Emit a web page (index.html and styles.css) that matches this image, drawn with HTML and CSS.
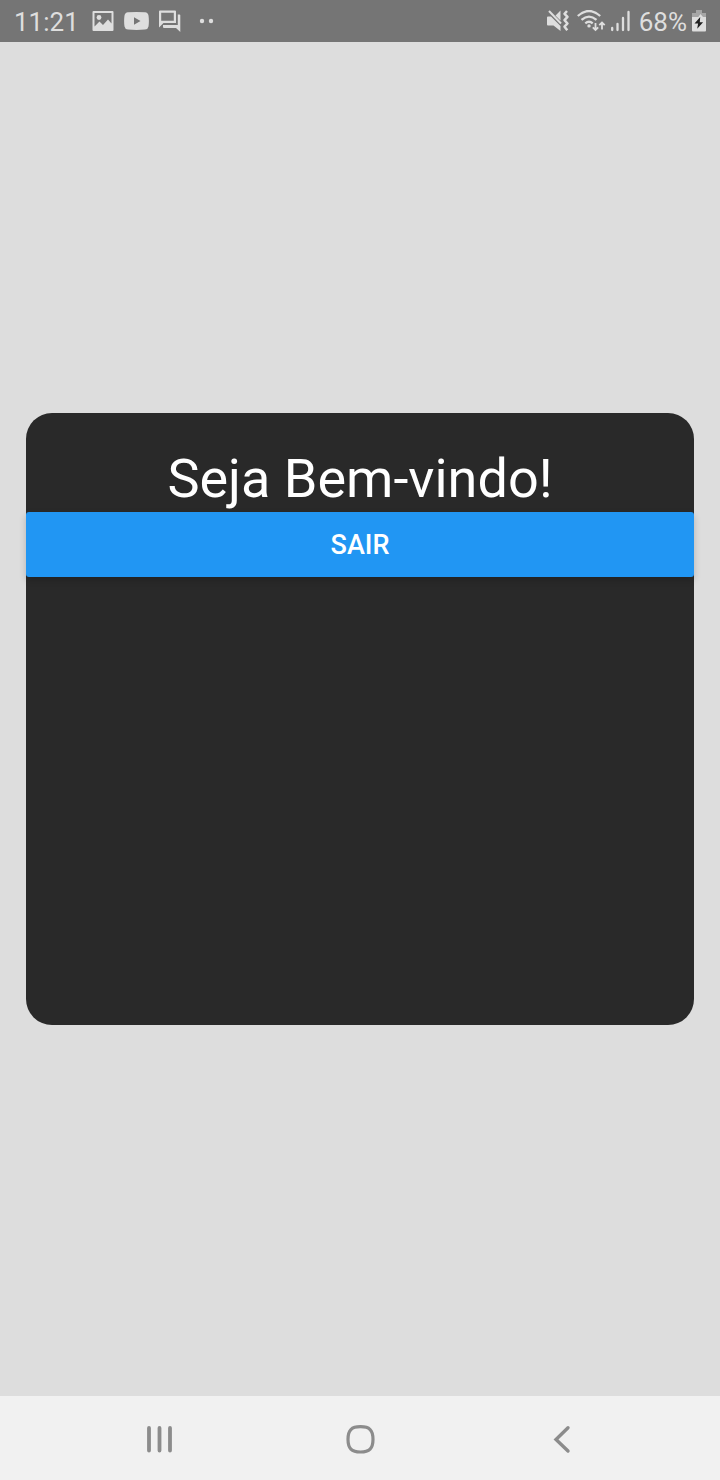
FILE: index.html
```html
<!DOCTYPE html>
<html lang="pt-BR">
<head>
<meta charset="utf-8">
<meta name="viewport" content="width=device-width, initial-scale=1">
<title>Seja Bem-vindo!</title>
<link rel="stylesheet" href="styles.css">
</head>
<body>
<div class="screen">
  <header class="status">
    <div class="status-group notifications">
      <span class="status-text time">11:21</span>
      <svg width="22" height="22" viewBox="0 0 22 22" aria-hidden="true"><path fill="currentColor" fill-rule="evenodd" d="M1.500 1h19a1 1 0 0 1 1 1v18a1 1 0 0 1-1 1h-19a1 1 0 0 1-1-1v-18a1 1 0 0 1 1-1zM2.500 3v13.500l5-5 3.500 3.500 5-5.500 3.500 4V3z"/><circle cx="7" cy="7.500" r="2.400" fill="currentColor"/></svg>
      <svg width="25" height="22" viewBox="0 0 25 22" aria-hidden="true"><path fill="currentColor" fill-rule="evenodd" d="M4 2.300Q12.500 1.500 21 2.300Q24 2.500 24.500 5.500Q25.300 11 24.500 16.500Q24 19.300 21 19.600Q12.500 20.500 4 19.600Q1 19.300 .5 16.500Q-.3 11 .5 5.500Q1 2.500 4 2.300zM10 7.200v7.600l6.500-3.800z"/></svg>
      <svg width="22" height="22" viewBox="0 0 22 22" aria-hidden="true"><path fill="currentColor" fill-rule="evenodd" d="M1 .5h15a1 1 0 0 1 1 1V13H4.500L0 17.500v-16a1 1 0 0 1 1-1zM2.200 2.700v8.100h12.600V2.700z"/><path fill="currentColor" d="M18.800 4.500h1.700a.8.8 0 0 1 .8.800V22L17 18H5a1 1 0 0 1-1-1v-2h14.800z"/></svg>
      <svg class="more" width="16" height="22" viewBox="0 0 16 22" fill="currentColor" aria-hidden="true"><circle cx="3" cy="11" r="2.200"/><circle cx="12" cy="11" r="2.200"/></svg>
    </div>
    <div class="status-group system">
      <svg class="mute" width="23" height="22" viewBox="0 0 23 22" aria-hidden="true"><path fill="currentColor" d="M0 7.500a1 1 0 0 1 1-1h3L13.500 16v5L6.500 15.500H1a1 1 0 0 1-1-1zM8.500 5.500l5-5v10z"/><path d="m2 1 12 12.500" stroke="currentColor" stroke-width="2"/><path d="m20 1-2.500 2.800 3 3-3 3.400 3 3.300-3 3.200 2.800 3.500" fill="none" stroke="currentColor" stroke-width="2.500" stroke-linejoin="round"/></svg>
      <svg width="29" height="22" viewBox="0 0 29 22" fill="none" stroke="currentColor" stroke-width="2.300" aria-hidden="true"><path d="M.8 6Q12-4 23.200 6M4.500 9.900q7.500-6.600 15 0M8.300 13.300q3.700-3.200 7.400 0"/><circle cx="12" cy="15.900" r="1.700" fill="currentColor" stroke="none"/><path stroke-width="1.800" d="M18.500 13v7M15.800 17.300l2.700 2.700 2.700-2.700M25 19.500v-7M22.300 15.200l2.700-2.700 2.700 2.700"/></svg>
      <svg width="19" height="22" viewBox="0 0 19 22" fill="none" stroke="currentColor" stroke-width="2.300" stroke-linecap="round" aria-hidden="true"><path d="M1.200 18v2M6.500 14v6M12 8v12M17.500 2v18"/></svg>
      <span class="status-text percent">68%</span>
      <svg width="14" height="22" viewBox="0 0 14 22" aria-hidden="true"><path fill="#a6a6a6" d="M4 0h6v3h4v5H0V3h4z"/><path fill="currentColor" d="M0 7h14v13.500a1 1 0 0 1-1 1H1a1 1 0 0 1-1-1z"/><path fill="currentColor" d="M8.500 4 2 13h4v4l5-6V7z"/><path fill="#202020" d="M8.200 7 2.500 13.500h3.600L5.200 18.800l5.900-6.600H7.800z"/></svg>
    </div>
  </header>
  <main class="content">
    <section class="card">
      <h1 class="title">Seja Bem-vindo!</h1>
      <button class="exit" type="button">SAIR</button>
    </section>
  </main>
  <nav class="nav" aria-label="Sistema">
    <button class="nav-button" type="button" aria-label="Recentes"><svg width="30" height="30" viewBox="0 0 30 30" fill="none" stroke="currentColor" stroke-width="3.800" stroke-linecap="round"><path d="M5 4v22.500M15.500 4v22.500M26 4v22.500"/></svg></button>
    <button class="nav-button" type="button" aria-label="Início"><svg width="30" height="30" viewBox="0 0 30 30" fill="none" stroke="currentColor" stroke-width="3.200"><path d="M15.500 2.700C24.500 2.700 28 6 28 15.300S24.500 28 15.500 28 3 24.500 3 15.300 6.500 2.700 15.500 2.700z"/></svg></button>
    <button class="nav-button" type="button" aria-label="Voltar"><svg width="30" height="30" viewBox="0 0 30 30" fill="none" stroke="currentColor" stroke-width="3.400" stroke-linecap="round"><path d="M22 3.800 10 15.500 22 27"/></svg></button>
  </nav>
</div>
</body>
</html>
```
FILE: styles.css
```css
* {
  box-sizing: border-box;
}

body {
  margin: 0;
  font-family: Roboto, sans-serif;
}

.screen {
  display: flex;
  flex-direction: column;
  min-height: 100vh;
  background: #dddddd;
}

.status {
  display: flex;
  align-items: center;
  justify-content: space-between;
  height: 42px;
  padding: 0 14px;
  background: #757575;
  color: #dedede;
}

.status-group {
  display: flex;
  align-items: center;
}

.notifications {
  gap: 10px;
}

.system {
  gap: 5px;
}

.status-text {
  font-size: 26px;
  line-height: 42px;
  padding-top: 2px;
}

.time {
  margin-right: 3px;
}

.mute {
  margin-right: 2px;
}

.percent {
  margin-left: 4px;
}

.more {
  margin-left: 8px;
}

.content {
  flex: 1;
  display: flex;
  align-items: center;
  padding: 0 26px;
}

.card {
  flex: 1;
  min-height: 612px;
  padding-top: 32px;
  border-radius: 26px;
  background: #292929;
}

.title {
  margin: 0;
  color: #ffffff;
  font-size: 54px;
  font-weight: 400;
  line-height: 67px;
  text-align: center;
}

.exit {
  display: block;
  width: 100%;
  padding: 2px 0 0;
  border: 0;
  border-radius: 3px;
  background: #2196f3;
  box-shadow: 0 3px 7px rgba(0, 0, 0, 0.2);
  color: #ffffff;
  font-family: inherit;
  font-size: 27px;
  font-weight: 500;
  line-height: 63px;
}

.nav {
  display: flex;
  height: 84px;
  padding: 2px 58px 0;
  background: #f1f1f1;
}

.nav-button {
  flex: 1;
  display: flex;
  align-items: center;
  justify-content: center;
  padding: 0;
  border: 0;
  background: none;
  color: #8c8c8c;
}
```
